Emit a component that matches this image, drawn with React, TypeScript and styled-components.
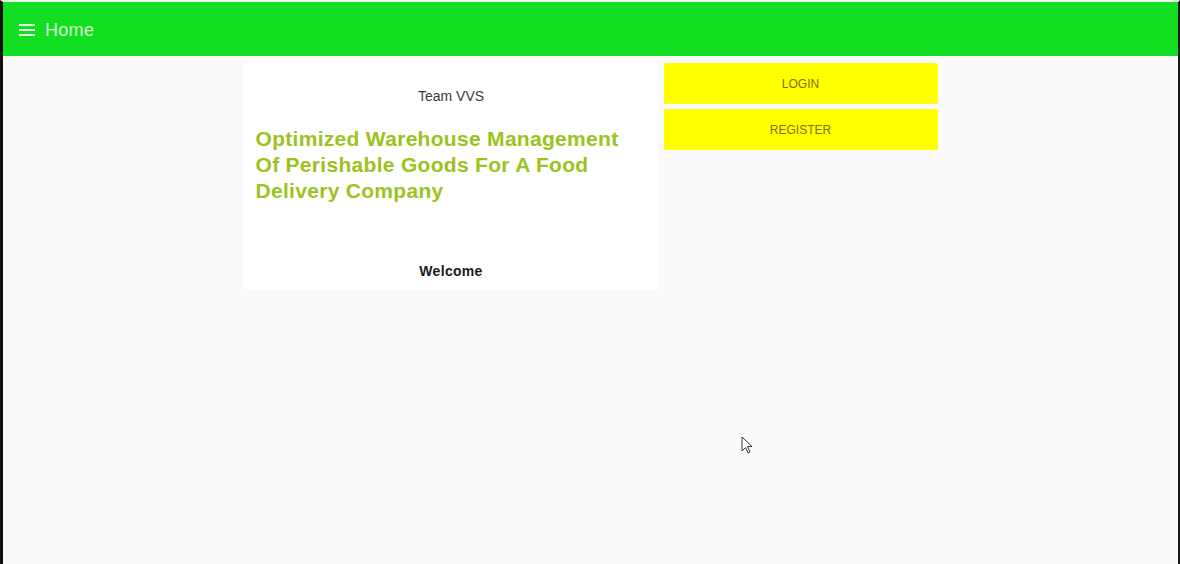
import React from "react";
import styled, { createGlobalStyle } from "styled-components";

const Global = createGlobalStyle`
  html, body { margin: 0; padding: 0; background: #fafafa; }
  body { font-family: "Liberation Sans", Arial, sans-serif; }
`;

const Frame = styled.div`
  position: relative;
  box-sizing: border-box;
  width: 1180px;
  height: 564px;
  border-left: 3px solid #111;
  border-right: 2px solid #1a1a1a;
  border-top: 2px solid #eef5ee;
  background: #fafafa;
  overflow: hidden;
`;

const Header = styled.header`
  height: 54px;
  background: #12df22;
  display: flex;
  align-items: center;
  padding-left: 16px;
  gap: 9px;
`;

const MenuIcon = styled.svg`
  width: 17px;
  height: 14px;
  display: block;
  margin-top: 2px;
`;

const HeaderTitle = styled.span`
  font-family: "Liberation Sans", Arial, sans-serif;
  font-size: 18px;
  color: #d8f7d0;
  letter-spacing: 0.3px;
  margin-top: 2px;
`;

const Main = styled.main`
  display: flex;
  justify-content: center;
  gap: 5px;
  padding-top: 7px;
`;

const Card = styled.section`
  width: 415px;
  height: 227px;
  background: #fff;
  box-sizing: border-box;
  padding: 25px 12px 0 12px;
  display: flex;
  flex-direction: column;
`;

const Team = styled.div`
  text-align: center;
  font-size: 14px;
  color: #3a3a3a;
  margin-bottom: 22px;
`;

const Title = styled.h1`
  margin: 0;
  font-size: 21px;
  line-height: 26px;
  font-weight: bold;
  color: #9cc21c;
  letter-spacing: 0.3px;
  max-width: 380px;
`;

const Welcome = styled.div`
  margin-top: auto;
  margin-bottom: 11px;
  text-align: center;
  font-size: 14px;
  font-weight: bold;
  color: #1a1a1a;
  letter-spacing: 0.3px;
`;

const Actions = styled.div`
  width: 274px;
  display: flex;
  flex-direction: column;
  gap: 5px;
`;

const ActionButton = styled.button`
  height: 41px;
  border: none;
  border-radius: 2px;
  background: #ffff00;
  color: #7d6e0a;
  font-family: "Liberation Sans", Arial, sans-serif;
  font-size: 12px;
  text-transform: uppercase;
  cursor: pointer;
  padding: 0;
`;

const Cursor = styled.svg`
  position: absolute;
  left: 738px;
  top: 434px;
  width: 14px;
  height: 20px;
`;

export default function App() {
  return (
    <>
      <Global />
      <Frame>
        <Header>
          <MenuIcon viewBox="0 0 17 14">
            <rect x="0" y="1" width="16" height="2" fill="#e4fbe0" />
            <rect x="0" y="6" width="16" height="2" fill="#e4fbe0" />
            <rect x="0" y="11" width="16" height="2" fill="#e4fbe0" />
          </MenuIcon>
          <HeaderTitle>Home</HeaderTitle>
        </Header>
        <Main>
          <Card>
            <Team>Team VVS</Team>
            <Title>Optimized Warehouse Management Of Perishable Goods For A Food Delivery Company</Title>
            <Welcome>Welcome</Welcome>
          </Card>
          <Actions>
            <ActionButton>Login</ActionButton>
            <ActionButton>Register</ActionButton>
          </Actions>
        </Main>
        <Cursor viewBox="0 0 14 20">
          <path d="M1 1 L1 15 L4.5 11.5 L7 17 L9 16 L6.5 10.5 L11 10.5 Z" fill="#fff" stroke="#333" strokeWidth="1" strokeLinejoin="round" />
        </Cursor>
      </Frame>
    </>
  );
}
